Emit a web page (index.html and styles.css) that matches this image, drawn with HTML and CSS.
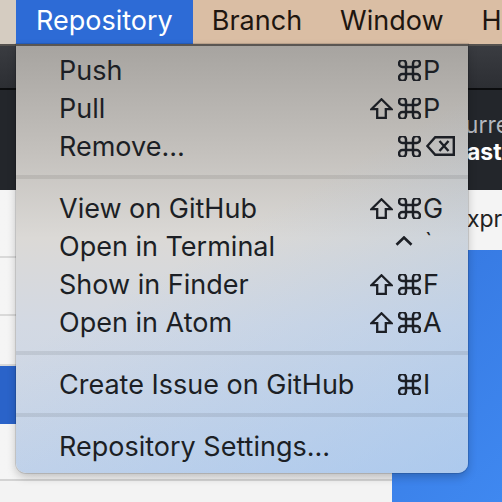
FILE: index.html
```html
<!DOCTYPE html>
<html>
<head>
<meta charset="utf-8">
<link rel="stylesheet" href="styles.css">
</head>
<body>
<div class="screen">
  <div class="menubar">
    <div class="mb-lead"></div>
    <div class="mb-item active">Repository</div>
    <div class="mb-item">Branch</div>
    <div class="mb-item">Window</div>
    <div class="mb-item">Help</div>
  </div>
  <div class="app">
    <div class="toolbar1"></div>
    <div class="toolbar2">
      <div class="branch">
        <div class="branch-label">Current Branch</div>
        <div class="branch-name">master</div>
      </div>
    </div>
    <div class="main">
      <div class="list">
        <div class="row r1"></div>
        <div class="row r2"></div>
        <div class="row r3"></div>
        <div class="row selected"></div>
        <div class="row r4"></div>
      </div>
      <div class="pane">
        <div class="pane-head"><span class="pane-text">express</span></div>
        <div class="pane-blue"></div>
      </div>
    </div>
  </div>

  <div class="menu">
    <div class="item"><span class="label">Push</span><span class="mods"><svg class="cmd" viewBox="3 3 18 18"><path d="M15 6v12a3 3 0 1 0 3-3H6a3 3 0 1 0 3 3V6a3 3 0 1 0-3 3h12a3 3 0 1 0-3-3"/></svg></span><span class="key">P</span></div>
    <div class="item"><span class="label">Pull</span><span class="mods"><svg class="shift" viewBox="0 0 23 21"><path d="M11.5 1.3 L21.6 11.2 H15.8 V19.8 H7.2 V11.2 H1.4 Z"/></svg><svg class="cmd" viewBox="3 3 18 18"><path d="M15 6v12a3 3 0 1 0 3-3H6a3 3 0 1 0 3 3V6a3 3 0 1 0-3 3h12a3 3 0 1 0-3-3"/></svg></span><span class="key">P</span></div>
    <div class="item"><span class="label">Remove…</span><span class="mods"><svg class="cmd" viewBox="3 3 18 18"><path d="M15 6v12a3 3 0 1 0 3-3H6a3 3 0 1 0 3 3V6a3 3 0 1 0-3 3h12a3 3 0 1 0-3-3"/></svg></span><span class="key"><svg class="del" viewBox="0 0 29 20"><path d="M1.4 10 L9.2 1.2 H27.8 V18.8 H9.2 Z"/><path d="M13.5 5 L22.5 15 M22.5 5 L13.5 15"/></svg></span></div>
    <div class="sep"></div>
    <div class="item"><span class="label">View on GitHub</span><span class="mods"><svg class="shift" viewBox="0 0 23 21"><path d="M11.5 1.3 L21.6 11.2 H15.8 V19.8 H7.2 V11.2 H1.4 Z"/></svg><svg class="cmd" viewBox="3 3 18 18"><path d="M15 6v12a3 3 0 1 0 3-3H6a3 3 0 1 0 3 3V6a3 3 0 1 0-3 3h12a3 3 0 1 0-3-3"/></svg></span><span class="key">G</span></div>
    <div class="item"><span class="label">Open in Terminal</span><span class="mods"><svg class="ctrl" viewBox="0 0 18 10"><path d="M1.5 8.8 L9 1.5 L16.5 8.8"/></svg></span><span class="key tick">`</span></div>
    <div class="item"><span class="label">Show in Finder</span><span class="mods"><svg class="shift" viewBox="0 0 23 21"><path d="M11.5 1.3 L21.6 11.2 H15.8 V19.8 H7.2 V11.2 H1.4 Z"/></svg><svg class="cmd" viewBox="3 3 18 18"><path d="M15 6v12a3 3 0 1 0 3-3H6a3 3 0 1 0 3 3V6a3 3 0 1 0-3 3h12a3 3 0 1 0-3-3"/></svg></span><span class="key">F</span></div>
    <div class="item"><span class="label">Open in Atom</span><span class="mods"><svg class="shift" viewBox="0 0 23 21"><path d="M11.5 1.3 L21.6 11.2 H15.8 V19.8 H7.2 V11.2 H1.4 Z"/></svg><svg class="cmd" viewBox="3 3 18 18"><path d="M15 6v12a3 3 0 1 0 3-3H6a3 3 0 1 0 3 3V6a3 3 0 1 0-3 3h12a3 3 0 1 0-3-3"/></svg></span><span class="key">A</span></div>
    <div class="sep"></div>
    <div class="item"><span class="label">Create Issue on GitHub</span><span class="mods"><svg class="cmd" viewBox="3 3 18 18"><path d="M15 6v12a3 3 0 1 0 3-3H6a3 3 0 1 0 3 3V6a3 3 0 1 0-3 3h12a3 3 0 1 0-3-3"/></svg></span><span class="key">I</span></div>
    <div class="sep"></div>
    <div class="item"><span class="label">Repository Settings…</span><span class="mods"></span><span class="key"></span></div>
  </div>
</div>
</body>
</html>
```

FILE: styles.css
```css
* { box-sizing: border-box; }
html, body { margin: 0; padding: 0; }
body {
  width: 502px;
  height: 502px;
  overflow: hidden;
  font-family: Inter, "Noto Sans", sans-serif;
}
.screen {
  position: relative;
  width: 502px;
  height: 502px;
  display: flex;
  flex-direction: column;
  background: #f2f2f2;
}
.menubar {
  height: 44px;
  display: flex;
  align-items: stretch;
  background: #dabea4;
  font-size: 27px;
  color: #1e1610;
  flex: none;
  overflow: hidden;
}
.mb-lead {
  width: 16px;
  flex: none;
  background: #d5ccc1;
}
.mb-item {
  display: flex;
  align-items: center;
  padding: 0 19px 3px;
  white-space: nowrap;
  flex: none;
}
.mb-item.active {
  background: #2d6bd6;
  color: #fff;
  padding: 0 20px 3px;
}
.app {
  flex: 1;
  display: flex;
  flex-direction: column;
}
.toolbar1 {
  height: 46px;
  background: linear-gradient(#3a3c41, #2c2e33);
  border-top: 2px solid #55524f;
  border-bottom: 2px solid #0b0c0e;
}
.toolbar2 {
  height: 100px;
  background: #23262b;
  display: flex;
  align-items: center;
  padding-left: 448px;
  padding-bottom: 2px;
}
.branch {
  width: 54px;
  overflow: hidden;
  white-space: nowrap;
  font-size: 23px;
  line-height: 27px;
}
.branch-label {
  color: #b4b8be;
}
.branch-name {
  color: #fff;
  font-weight: 700;
  margin-left: -2px;
}
.main {
  flex: 1;
  display: flex;
}
.list {
  width: 392px;
  flex: none;
  display: flex;
  flex-direction: column;
  background: #f3f3f3;
}
.row {
  border-bottom: 2px solid #d9d9d9;
  background: linear-gradient(90deg, #f5f5f5, #eeeeef);
}
.r1 { height: 68px; }
.r2 { height: 58px; }
.r3 { height: 50px; }
.selected {
  height: 58px;
  background: #2a63c9;
  border-bottom: none;
}
.r4 {
  height: 57px;
  border-bottom: 2px solid #d3d3d3;
}
.pane {
  flex: 1;
  display: flex;
  flex-direction: column;
  overflow: hidden;
}
.pane-head {
  height: 60px;
  background: #f4f4f4;
  display: flex;
  align-items: center;
  padding-left: 62px;
  font-size: 23px;
  color: #222;
  white-space: nowrap;
  overflow: hidden;
  padding-bottom: 2px;
}
.pane-blue {
  flex: 1;
  background: linear-gradient(135deg, #3577e0, #3f88f0);
}

.menu {
  position: absolute;
  left: 16px;
  top: 44px;
  width: 452px;
  padding: 5px 0 8px;
  border-top: 2px solid #5a5652;
  border-radius: 0 0 10px 10px;
  background:
    linear-gradient(150deg, rgba(160,195,240,0) 45%, rgba(150,192,242,0.55) 100%),
    linear-gradient(180deg, #a7a4a0 0%, #c4c1bd 25%, #dbd9d6 45%, #d3d9e3 65%, #c8d5e8 100%);
  box-shadow: 0 4px 10px rgba(0,0,0,0.22), 0 0 0 1px rgba(0,0,0,0.12);
  font-size: 27px;
  color: #1c1f25;
  display: flex;
  flex-direction: column;
}
.item {
  height: 38px;
  display: grid;
  grid-template-columns: 1fr auto 38px;
  align-items: center;
  padding-left: 43px;
  padding-right: 7px;
  white-space: nowrap;
}
.mods {
  display: flex;
  align-items: center;
  justify-content: flex-end;
  gap: 5px;
  padding-right: 2px;
}
.key {
  display: flex;
  align-items: center;
}
svg {
  fill: none;
  stroke: #1c1f25;
  display: block;
}
.cmd {
  width: 23px;
  height: 21px;
  stroke-width: 2.1;
}
.shift {
  width: 23px;
  height: 21px;
  stroke-width: 2.3;
  stroke-linejoin: miter;
}
.del {
  width: 29px;
  height: 20px;
  margin-left: 3px;
  stroke-width: 2.4;
  stroke-linejoin: miter;
}
.ctrl {
  width: 18px;
  height: 10px;
  stroke-width: 2.6;
  margin-bottom: 10px;
  margin-right: 8px;
}
.tick {
  font-size: 22px;
  margin-left: 2px;
  margin-bottom: 10px;
}
.sep {
  height: 4px;
  margin: 10px 0;
  background: rgba(0,0,0,0.08);
}
```
